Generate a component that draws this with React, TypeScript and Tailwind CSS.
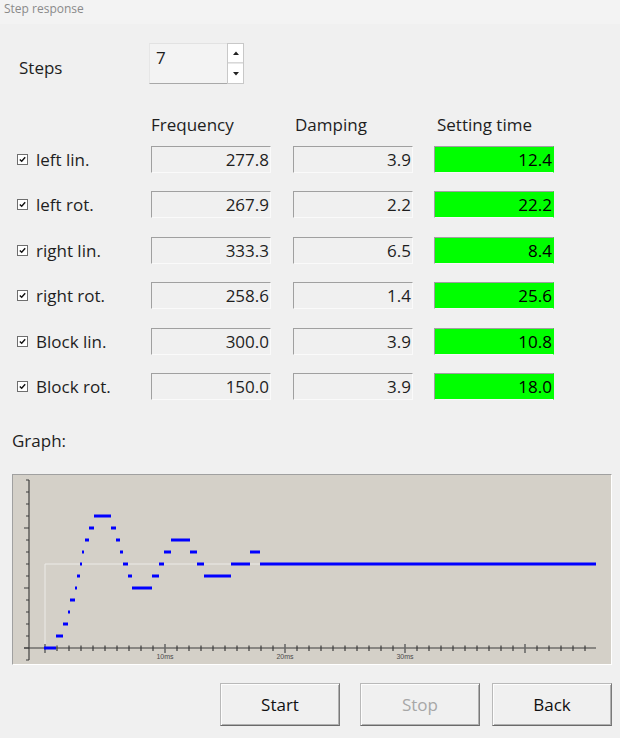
import React from 'react';

const font = { fontFamily: '"Open Sans", "Noto Sans", sans-serif' };

type Row = { label: string; freq: string; damp: string; time: string };

const rows: Row[] = [
  { label: 'left lin.', freq: '277.8', damp: '3.9', time: '12.4' },
  { label: 'left rot.', freq: '267.9', damp: '2.2', time: '22.2' },
  { label: 'right lin.', freq: '333.3', damp: '6.5', time: '8.4' },
  { label: 'right rot.', freq: '258.6', damp: '1.4', time: '25.6' },
  { label: 'Block lin.', freq: '300.0', damp: '3.9', time: '10.8' },
  { label: 'Block rot.', freq: '150.0', damp: '3.9', time: '18.0' },
];

// [x1, x2, level] in page pixels, level * 12px above the zero line
const segments: [number, number, number][] = [
  [44, 56, 0], [56, 63, 1], [63, 68, 2], [68, 70, 3], [70, 75, 4], [75, 77, 5],
  [77, 80, 6], [80, 82, 7], [82, 84, 8], [85, 89, 9], [89, 94, 10], [94, 111, 11],
  [111, 116, 10], [116, 120, 9], [120, 123, 8], [123, 128, 7], [128, 132, 6],
  [132, 152, 5], [152, 159, 6], [159, 164, 7], [164, 171, 8], [171, 190, 9],
  [190, 197, 8], [197, 204, 7], [204, 231, 6], [231, 250, 7], [250, 260, 8],
  [260, 596, 7],
];

function CheckBox() {
  return (
    <span className="flex h-[11px] w-[11px] items-center justify-center border border-[#6e6e6e] bg-white">
      <svg width="7" height="7" viewBox="0 0 7 7">
        <path d="M0.8 3.4 L2.7 5.3 L6.2 1.2" fill="none" stroke="#111" strokeWidth="1.4" />
      </svg>
    </span>
  );
}

function Field({ value, green }: { value: string; green?: boolean }) {
  return (
    <div
      className={`flex h-[27px] w-[120px] items-center justify-end border border-t-[#a0a0a0] border-l-[#a0a0a0] pr-[1px] text-[17px] leading-none ${
        green
          ? 'border-r-[#00ff00] border-b-[#f8f8f8] bg-[#00ff00] text-black'
          : 'border-r-[#fafafa] border-b-[#fafafa] bg-[#f0f0f0] text-[#1e1e1e]'
      }`}
    >
      {value}
    </div>
  );
}

function Spinner() {
  return (
    <div className="flex h-[41px] w-[95px]">
      <div className="h-full w-[78px] border-t border-l border-t-[#e2e2e2] border-l-[#e6e6e6] border-b border-b-[#a8a8a8] bg-[#f3f3f3] pl-[6px] pt-[2px] text-[17px] leading-[23px] text-[#1e1e1e]">
        7
      </div>
      <div className="flex h-full w-[17px] flex-col border border-[#c8c8c8] bg-[#e8e8e8]">
        <div className="flex h-[19px] items-center justify-center border-b border-[#d8d8d8] bg-white">
          <svg width="6" height="4" viewBox="0 0 6 4">
            <path d="M0 4 L3 0.5 L6 4 Z" fill="#222" />
          </svg>
        </div>
        <div className="mt-[1px] flex flex-1 items-center justify-center bg-white">
          <svg width="6" height="4" viewBox="0 0 6 4">
            <path d="M0 0 L3 3.5 L6 0 Z" fill="#222" />
          </svg>
        </div>
      </div>
    </div>
  );
}

function Chart() {
  const yTicks = Array.from({ length: 16 }, (_, i) => 480 + i * 12);
  const xTicks = Array.from({ length: 46 }, (_, i) => 45 + i * 12);
  return (
    <div className="h-[191px] w-[600px] border border-t-[#a0a0a0] border-l-[#a0a0a0] border-r-white border-b-white bg-[#d4d0c8]">
      <svg width="598" height="189" viewBox="13 475 598 189" className="block">
        <polyline points="45,648 45,564 596,564" fill="none" stroke="#ecebe8" strokeWidth="1" />
        <line x1="29" y1="480" x2="29" y2="660" stroke="#7c7a76" strokeWidth="2" />
        {yTicks.map((y) => {
          const major = (648 - y) % 60 === 0;
          return <line key={y} x1={major ? 24 : 26} y1={y} x2="29" y2={y} stroke="#3a3a3a" strokeWidth="1" />;
        })}
        <line x1="24" y1="648" x2="596" y2="648" stroke="#3c3c3c" strokeWidth="1.2" />
        {xTicks.map((x, i) => {
          const major = i % 10 === 0;
          return (
            <line
              key={x}
              x1={x}
              y1={major ? 644 : 645.5}
              x2={x}
              y2={major ? 653 : 651}
              stroke={major ? '#6a6a6a' : '#3c3c3c'}
              strokeWidth={major ? 1.6 : 1.2}
            />
          );
        })}
        {[
          [165, '10ms'],
          [285, '20ms'],
          [405, '30ms'],
        ].map(([x, t]) => (
          <text key={t} x={x} y="659" textAnchor="middle" fontSize="7" fill="#4a4a4a" fontFamily="Liberation Sans, Arial, sans-serif">
            {t}
          </text>
        ))}
        {segments.map(([a, b, l], i) => (
          <line key={i} x1={a} y1={648 - l * 12} x2={b} y2={648 - l * 12} stroke="#0000ff" strokeWidth="3" />
        ))}
      </svg>
    </div>
  );
}

function Button({ children, disabled }: { children: React.ReactNode; disabled?: boolean }) {
  return (
    <button
      className={`h-[43px] w-[120px] border border-t-[#b9b9b9] border-l-[#b9b9b9] border-r-[#7a7a7a] border-b-[#6a6a6a] bg-[#f0f0f0] text-[17px] shadow-[inset_1px_1px_0_#fdfdfd,inset_-1px_-1px_0_#b0b0b0] ${
        disabled ? 'text-[#a7a7a7]' : 'text-[#111]'
      }`}
      style={font}
    >
      {children}
    </button>
  );
}

export default function App() {
  return (
    <div className="h-[738px] w-[620px] overflow-hidden bg-[#f0f0f0] text-[#1e1e1e]" style={font}>
      <div className="h-[24px] bg-[#f3f3f3] pl-[4px] text-[12px] leading-[18px] text-[#8a8a8a]">Step response</div>

      <div className="mt-[19px] flex">
        <div className="mt-[13px] w-[149px] pl-[19px] text-[17px] leading-[23px]">Steps</div>
        <Spinner />
      </div>

      <div className="mt-[29px] flex text-[17px] leading-[23px]">
        <div className="w-[151px]" />
        <div className="w-[142px]">Frequency</div>
        <div className="w-[141px] pl-[2px]">Damping</div>
        <div className="pl-[3px]">Setting time</div>
      </div>

      <div className="mt-[10px] flex flex-col gap-[18.4px]">
        {rows.map((r) => (
          <div key={r.label} className="flex h-[27px] items-center">
            <div className="flex w-[151px] items-center gap-[8px] pl-[17px] text-[17px] leading-[23px]">
              <CheckBox />
              <span>{r.label}</span>
            </div>
            <Field value={r.freq} />
            <div className="ml-[22px]">
              <Field value={r.damp} />
            </div>
            <div className="ml-[21px]">
              <Field value={r.time} green />
            </div>
          </div>
        ))}
      </div>

      <div className="mt-[29px] pl-[12px] text-[17px] leading-[23px]">Graph:</div>

      <div className="mt-[22px] pl-[12px]">
        <Chart />
      </div>

      <div className="mt-[18px] flex pl-[220px]">
        <Button>Start</Button>
        <div className="ml-[20px]">
          <Button disabled>Stop</Button>
        </div>
        <div className="ml-[12px]">
          <Button>Back</Button>
        </div>
      </div>
    </div>
  );
}
